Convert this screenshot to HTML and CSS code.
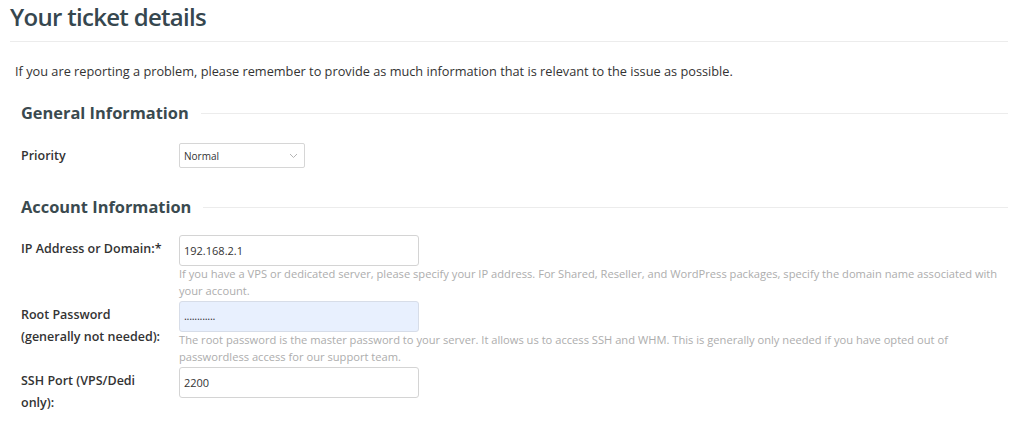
FILE: index.html
```html
<!DOCTYPE html>
<html lang="en">
<head>
<meta charset="utf-8">
<title>Your ticket details</title>
<link rel="stylesheet" href="styles.css">
</head>
<body>
<div class="page">
  <h1 class="title">Your ticket details</h1>
  <p class="intro">If you are reporting a problem, please remember to provide as much information that is relevant to the issue as possible.</p>

  <div class="section">
    <div class="section-head"><h2>General Information</h2><span class="rule"></span></div>
    <div class="row row-select">
      <label class="label">Priority</label>
      <div class="field">
        <div class="select">
          <span>Normal</span>
          <svg class="chev" width="9" height="6" viewBox="0 0 9 6"><path d="M1 1l3.5 3.5L8 1" fill="none" stroke="#b5b5b5" stroke-width="1"/></svg>
        </div>
      </div>
    </div>
  </div>

  <div class="section">
    <div class="section-head"><h2>Account Information</h2><span class="rule"></span></div>
    <div class="row">
      <label class="label">IP Address or Domain:*</label>
      <div class="field">
        <div class="input">192.168.2.1</div>
        <p class="help">If you have a VPS or dedicated server, please specify your IP address. For Shared, Reseller, and WordPress packages, specify the domain name associated with your account.</p>
      </div>
    </div>
    <div class="row">
      <label class="label">Root Password<br>(generally not needed):</label>
      <div class="field">
        <div class="input autofill">............</div>
        <p class="help">The root password is the master password to your server. It allows us to access SSH and WHM. This is generally only needed if you have opted out of passwordless access for our support team.</p>
      </div>
    </div>
    <div class="row">
      <label class="label">SSH Port (VPS/Dedi<br>only):</label>
      <div class="field">
        <div class="input">2200</div>
      </div>
    </div>
  </div>
</div>
</body>
</html>
```

FILE: styles.css
```css
* { box-sizing: border-box; }
html, body { margin: 0; padding: 0; background: #fff; }
body {
  font-family: "Open Sans", "Liberation Sans", sans-serif;
  color: #333;
  overflow: hidden;
}
.page {
  padding: 0 16px 0 10px;
}
.title {
  margin: 0;
  padding: 1px 0 8px;
  font-size: 24px;
  font-weight: 600;
  letter-spacing: -0.7px;
  line-height: 32px;
  color: #36474f;
  border-bottom: 1px solid #ececec;
}
.intro {
  margin: 20px 0 0 5px;
  font-size: 12.75px;
  line-height: 18px;
  color: #333;
}
.section {
  padding-left: 11px;
}
.section-head {
  display: flex;
  align-items: center;
  gap: 12px;
  margin-top: 21px;
  height: 22px;
}
.section + .section .section-head { margin-top: 27px; }
.section-head h2 {
  margin: 0;
  font-size: 16.4px;
  font-weight: 700;
  color: #3a4a4f;
  white-space: nowrap;
}
.section-head .rule {
  flex: 1;
  border-top: 1px solid #ececec;
  margin-top: 3px;
}
.row {
  display: flex;
  margin-top: 18px;
}
.row-select { margin-top: 20px; }
.row + .row { margin-top: 2px; }
.label {
  width: 158px;
  flex: none;
  font-size: 12.5px;
  font-weight: 600;
  line-height: 22px;
  color: #333;
  padding-top: 3px;
}
.row-select .label { padding-top: 2px; }
.field { flex: 1; }
.select {
  width: 126px;
  height: 25px;
  border: 1px solid #d6d6d6;
  border-radius: 2px;
  display: flex;
  align-items: center;
  justify-content: space-between;
  padding: 0 6px 0 4px;
  font-size: 10px;
  color: #333;
}
.input {
  width: 240px;
  height: 31px;
  border: 1px solid #d4d4d4;
  border-radius: 3px;
  padding: 0 4px;
  display: flex;
  align-items: center;
  font-size: 11px;
  color: #333;
}
.input.autofill {
  background: #e8f0fe;
  border-color: #d7dde8;
  font-size: 11px;
  letter-spacing: -0.3px;
  padding-bottom: 3px;
}
.help {
  margin: 0;
  padding: 0;
  font-size: 11.15px;
  line-height: 16.6px;
  color: #adadad;
  max-width: 825px;
}
```
